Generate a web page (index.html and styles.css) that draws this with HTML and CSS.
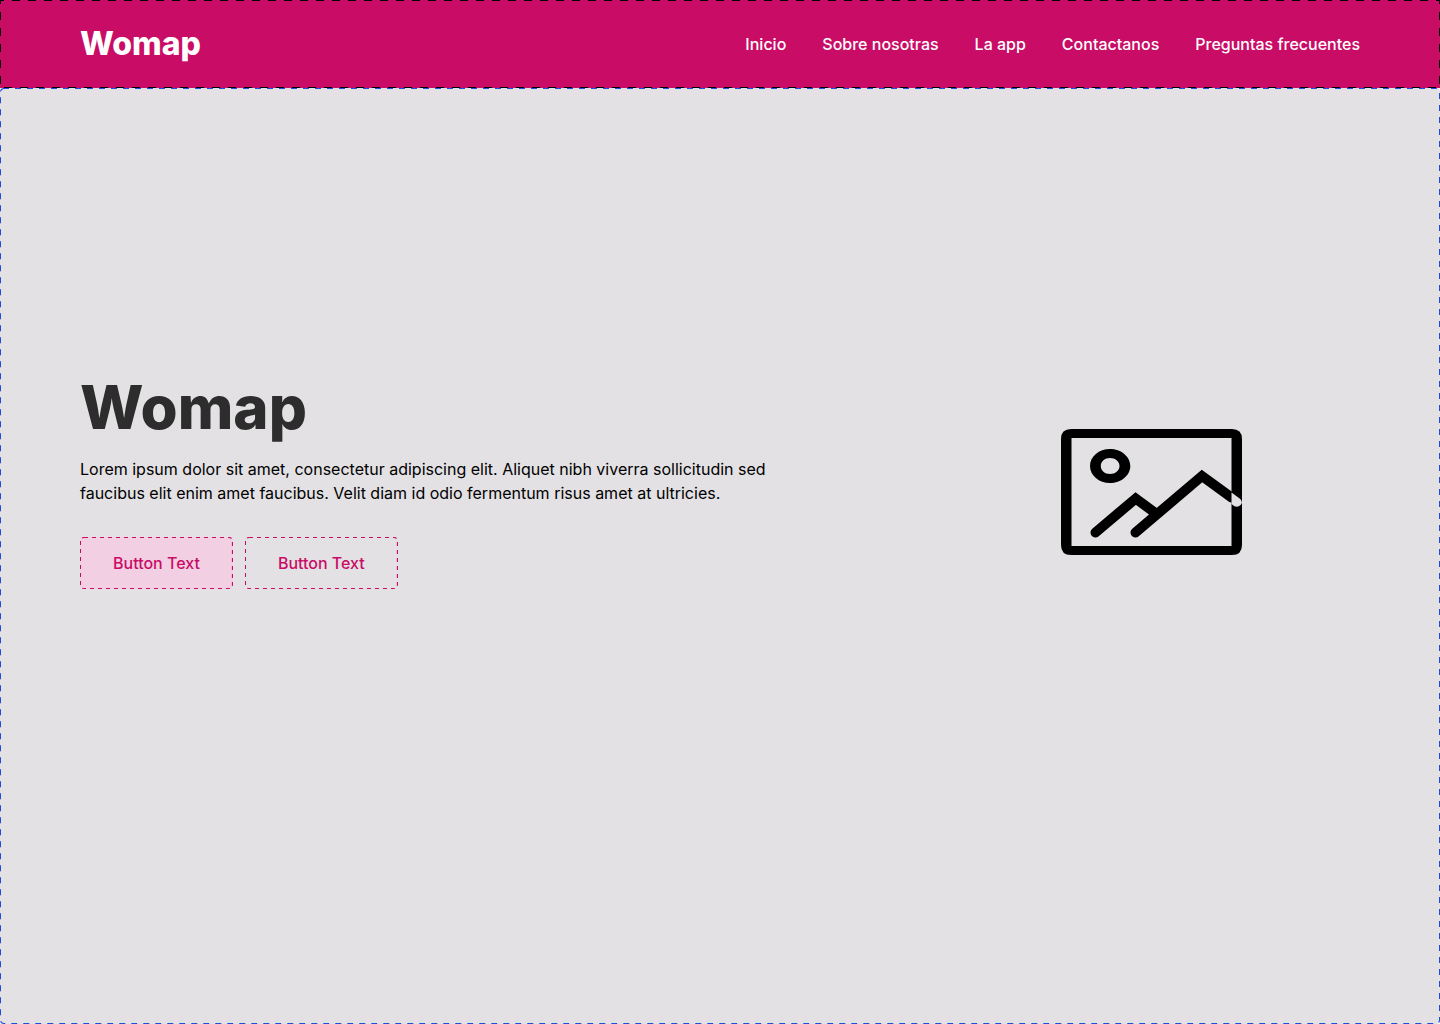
FILE: index.html
```html
<!DOCTYPE html>
<html lang="es">
<head>
<meta charset="utf-8">
<meta name="viewport" content="width=device-width, initial-scale=1">
<title>Womap</title>
<link rel="stylesheet" href="styles.css">
</head>
<body>
<header class="site-header">
  <svg class="outline outline-header" aria-hidden="true"><rect width="100%" height="100%"/></svg>
  <a class="logo" href="#">Womap</a>
  <nav class="nav" aria-label="Principal">
    <a href="#">Inicio</a>
    <a href="#">Sobre nosotras</a>
    <a href="#">La app</a>
    <a href="#">Contactanos</a>
    <a href="#">Preguntas frecuentes</a>
  </nav>
</header>
<main class="hero">
  <svg class="outline outline-hero" aria-hidden="true"><rect width="100%" height="100%" rx="4"/></svg>
  <div class="hero-text">
    <h1 class="title">Womap</h1>
    <p class="lead">Lorem ipsum dolor sit amet, consectetur adipiscing elit. Aliquet nibh viverra sollicitudin sed faucibus elit enim amet faucibus. Velit diam id odio fermentum risus amet at ultricies.</p>
    <div class="actions">
      <button class="button button-filled" type="button"><svg class="outline outline-button" aria-hidden="true"><rect width="100%" height="100%" rx="4"/></svg>Button Text</button>
      <button class="button" type="button"><svg class="outline outline-button" aria-hidden="true"><rect width="100%" height="100%" rx="4"/></svg>Button Text</button>
    </div>
  </div>
  <div class="hero-media">
    <svg class="picture" viewBox="0 0 181 126" role="img" aria-label="Imagen">
      <path fill-rule="evenodd" d="M10 0H171Q181 0 181 10V116Q181 126 171 126H10Q0 126 0 116V10Q0 0 10 0ZM10.5 9V117H170.5V9Z"/>
      <path fill-rule="evenodd" d="M49 20C60 20 69.300 27.500 69.300 37S60 54 49 54S29 46.500 29 37S38 20 49 20ZM49 29C43.800 29 39.800 32.500 39.800 37S43.800 45 49 45S58.500 41.500 58.500 37S54.200 29 49 29Z"/>
      <path class="ridge" d="M34.500 103.500L74.700 69.500L95 84.500M74.500 103.500L141 47L170.500 68.500"/>
      <path class="ridge-end" d="M170.500 63.500L179.300 70Q182 73 180 75.500Q177 79 173 77L170.500 75Z"/>
    </svg>
  </div>
</main>
</body>
</html>
```
FILE: styles.css
```css
* { box-sizing: border-box; }

body {
  margin: 0;
  min-height: 100vh;
  display: flex;
  flex-direction: column;
  font-family: Inter, "Liberation Sans", sans-serif;
  font-size: 16px;
  line-height: 24px;
  color: #000;
  background: #fff;
}

.outline {
  position: absolute;
  top: 0;
  left: 0;
  width: 100%;
  height: 100%;
  overflow: hidden;
  border-radius: inherit;
  pointer-events: none;
}
.outline rect { fill: none; stroke-width: 2px; }
.outline-header rect { stroke: #000; stroke-dasharray: 8 8; stroke-dashoffset: 4px; }
.outline-hero rect { stroke: #1d4ed8; stroke-dasharray: 6 6; stroke-dashoffset: 1px; }
.outline-button rect { stroke: #c90c66; stroke-dasharray: 4 4; }

.site-header {
  position: relative;
  display: flex;
  align-items: center;
  justify-content: space-between;
  padding: 24px 80px;
  background: #c90c66;
}

.logo {
  font-size: 32px;
  line-height: 40px;
  font-weight: 800;
  color: #fff;
  text-decoration: none;
}

.nav { display: flex; gap: 36px; }
.nav a { color: #fff; font-weight: 500; text-decoration: none; }

.hero {
  position: relative;
  flex: 1;
  display: grid;
  grid-template-columns: minmax(0, 1fr) 418px;
  align-items: start;
  padding: 283px 80px 80px;
  background: #e3e1e4;
  border-radius: 4px;
}

.hero-text { max-width: 692px; }
.title {
  margin: 0;
  font-size: 60px;
  line-height: 72px;
  font-weight: 800;
  color: #2d2d2d;
}
.lead { margin: 14px 0 32px; }
.actions { display: flex; gap: 12px; }

.button {
  position: relative;
  padding: 14px 33px;
  border: 0;
  border-radius: 4px;
  background: transparent;
  color: #c90c66;
  font: inherit;
  font-weight: 500;
}
.button-filled { background: #f3cfe3; }

.hero-media { display: flex; justify-content: center; padding-top: 58px; }
.picture { width: 181px; height: 126px; }
.ridge { fill: none; stroke: #000; stroke-width: 10px; stroke-linecap: round; }
.ridge-end { fill: #e3e1e4; }
```
